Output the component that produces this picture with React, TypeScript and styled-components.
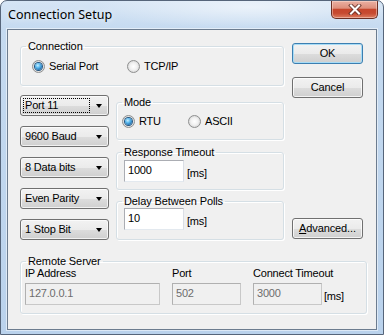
import React from 'react';
import styled, { createGlobalStyle } from 'styled-components';

const GlobalStyle = createGlobalStyle`
  html, body { margin: 0; padding: 0; background: #ffffff; }
  body { font-family: "Liberation Sans", Arial, sans-serif; }
  * { box-sizing: border-box; }
`;

const Window = styled.div`
  width: 384px;
  height: 335px;
  display: flex;
  flex-direction: column;
  background:
    radial-gradient(ellipse 160px 22px at 250px 6px, rgba(255,255,255,0.55), rgba(255,255,255,0) 100%),
    linear-gradient(180deg, #d6e5f5 0px, #c5daf0 28px, #bad2ec 100%);
  border: 1px solid #56657a;
  border-radius: 7px 7px 0 0;
  overflow: hidden;
`;

const TitleBar = styled.div`
  height: 28px;
  flex: none;
  display: flex;
  align-items: flex-start;
  padding-left: 7px;
`;

const Title = styled.div`
  margin-top: 5px;
  font-family: "Noto Sans", "Open Sans", sans-serif;
  font-size: 12.5px;
  line-height: 17px;
  color: #000;
  text-shadow: 0 0 6px rgba(255,255,255,0.9);
`;

const CloseButton = styled.div`
  margin-left: auto;
  margin-right: 5px;
  width: 47px;
  height: 18px;
  display: flex;
  align-items: center;
  justify-content: center;
  border: 1px solid #6b2f24;
  border-top: none;
  border-radius: 0 0 5px 5px;
  background: linear-gradient(180deg, #eab0a2 0%, #de8f7c 42%, #c6462c 50%, #c74a30 72%, #dc7c60 100%);
  box-shadow: inset 0 0 0 1px rgba(255, 230, 220, 0.45);
`;

const Frame = styled.div`
  flex: 1;
  display: flex;
  padding: 0 6px 4px 6px;
`;

const Client = styled.div`
  flex: 1;
  background: #f0f0f0;
  border: 1px solid #6c7c8f;
  box-shadow: 0 0 0 1px rgba(255, 255, 255, 0.5);
  padding: 10px 0 0 12px;
  display: flex;
  flex-direction: column;
  font-size: 11px;
  color: #000;
`;

const Upper = styled.div`
  display: flex;
  align-items: stretch;
`;

const LeftArea = styled.div`
  width: 264px;
  display: flex;
  flex-direction: column;
`;

const Group = styled.fieldset<{ $h: number; $mt?: number; $w?: number }>`
  margin: ${p => p.$mt ?? 0}px 0 0 0;
  padding: 0;
  min-width: 0;
  width: ${p => (p.$w ? `${p.$w}px` : 'auto')};
  height: ${p => p.$h}px;
  border: 1px solid #d5dfe5;
  border-radius: 3px;
  box-shadow: inset 1px 1px 0 #ffffff, 1px 1px 0 #ffffff;
`;

const Legend = styled.legend`
  margin-left: 5px;
  padding: 0 2px;
  font-size: 11px;
  line-height: 13px;
  letter-spacing: -0.1px;
`;

const GroupBody = styled.div<{ $pt: number; $pl: number }>`
  padding: ${p => p.$pt}px 0 0 ${p => p.$pl}px;
  display: flex;
  align-items: center;
`;

const RadioItem = styled.label<{ $w?: number }>`
  display: flex;
  align-items: center;
  width: ${p => (p.$w ? `${p.$w}px` : 'auto')};
  line-height: 13px;
  letter-spacing: -0.2px;
`;

const RadioCircle = styled.span<{ $checked?: boolean }>`
  width: 13px;
  height: 13px;
  flex: none;
  border-radius: 50%;
  border: 1px solid #8e8f8f;
  background: radial-gradient(circle at 50% 50%, #ffffff 0%, #f1f1f1 45%, #d6d6d6 80%, #cbcbcb 100%);
  display: flex;
  align-items: center;
  justify-content: center;
  margin-right: 4px;
  &::after {
    content: '';
    display: ${p => (p.$checked ? 'block' : 'none')};
    width: 7px;
    height: 7px;
    border-radius: 50%;
    background: radial-gradient(circle at 40% 35%, #c9f0ff 0%, #5fbcf0 35%, #1f6fae 75%, #164f80 100%);
    box-shadow: 0 0 0 1px #24557f;
  }
`;

const Lower = styled.div`
  display: flex;
  align-items: flex-start;
  margin-top: 9px;
`;

const ComboCol = styled.div`
  display: flex;
  flex-direction: column;
  gap: 10px;
  width: 89px;
`;

const Combo = styled.div`
  height: 21px;
  display: flex;
  align-items: center;
  padding: 0 6px 0 2px;
  border: 1px solid #707070;
  border-radius: 3px;
  background: linear-gradient(180deg, #f2f2f2 0%, #ebebeb 50%, #dddddd 51%, #cfcfcf 100%);
  box-shadow: inset 0 0 0 1px rgba(255, 255, 255, 0.7);
  &::after {
    content: '';
    margin-left: auto;
    border-left: 3.5px solid transparent;
    border-right: 3.5px solid transparent;
    border-top: 4px solid #000;
  }
`;

const ComboText = styled.span<{ $focused?: boolean }>`
  width: 67px;
  height: 15px;
  padding-left: 1px;
  line-height: 13px;
  border: 1px dotted ${p => (p.$focused ? '#000' : 'transparent')};
  letter-spacing: -0.2px;
  white-space: nowrap;
`;

const GroupCol = styled.div`
  width: 168px;
  margin-left: 7px;
  padding-top: 1px;
  display: flex;
  flex-direction: column;
`;

const FieldRow = styled.div<{ $pl: number; $pt?: number }>`
  display: flex;
  align-items: flex-end;
  padding-left: ${p => p.$pl}px;
  padding-top: ${p => p.$pt ?? 0}px;
`;

const TextBox = styled.div<{ $w: number; $disabled?: boolean }>`
  width: ${p => p.$w}px;
  height: 22px;
  padding: 3px 0 0 3px;
  line-height: 13px;
  background: ${p => (p.$disabled ? '#f0f0f0' : '#ffffff')};
  color: ${p => (p.$disabled ? '#6d6d6d' : '#000')};
  border: 1px solid ${p => (p.$disabled ? '#b0b0b0' : '#abadb3')};
  border-right-color: ${p => (p.$disabled ? '#c8c8c8' : '#dbdfe6')};
  border-bottom-color: ${p => (p.$disabled ? '#c8c8c8' : '#e3e9ef')};
  letter-spacing: -0.2px;
`;

const Unit = styled.span<{ $ml: number }>`
  margin-left: ${p => p.$ml}px;
  margin-bottom: 2px;
  line-height: 13px;
  letter-spacing: -0.2px;
`;

const ButtonCol = styled.div`
  width: 71px;
  margin-left: 8px;
  display: flex;
  flex-direction: column;
  padding-top: 3px;
`;

const Button = styled.div<{ $default?: boolean; $mt?: number; $auto?: boolean }>`
  height: 21px;
  display: flex;
  align-items: center;
  justify-content: center;
  margin-top: ${p => (p.$auto ? 'auto' : `${p.$mt ?? 0}px`)};
  margin-bottom: ${p => (p.$auto ? '1px' : '0')};
  border: 1px solid ${p => (p.$default ? '#3c7fb1' : '#707070')};
  border-radius: 3px;
  background: linear-gradient(180deg, #f2f2f2 0%, #ebebeb 50%, #dddddd 51%, #cfcfcf 100%);
  box-shadow: inset 0 0 0 1px ${p => (p.$default ? '#a8dcf6' : 'rgba(255,255,255,0.75)')};
  line-height: 13px;
  letter-spacing: -0.1px;
  & u { text-decoration: underline; text-underline-offset: 1px; }
`;

const RemoteGrid = styled.div`
  display: grid;
  grid-template-columns: 147px 81px auto;
  padding: 0 0 0 4px;
  margin-top: -1px;
  row-gap: 3px;
`;

const Label = styled.div`
  line-height: 13px;
  letter-spacing: -0.2px;
`;

const Cell = styled.div`
  display: flex;
  align-items: flex-end;
`;

const CloseIcon = () => (
  <svg width="14" height="11" viewBox="0 0 14 11">
    <path d="M3 1.5 L11 9.5 M11 1.5 L3 9.5" stroke="#5a2c25" strokeWidth="4" strokeLinecap="square" opacity="0.75" />
    <path d="M3 1.5 L11 9.5 M11 1.5 L3 9.5" stroke="#ffffff" strokeWidth="2" strokeLinecap="square" />
  </svg>
);

export default function App() {
  return (
    <>
      <GlobalStyle />
      <Window>
        <TitleBar>
          <Title>Connection Setup</Title>
          <CloseButton>
            <CloseIcon />
          </CloseButton>
        </TitleBar>
        <Frame>
          <Client>
            <Upper>
              <LeftArea>
                <Group $h={46}>
                  <Legend>Connection</Legend>
                  <GroupBody $pt={7} $pl={11}>
                    <RadioItem $w={95}>
                      <RadioCircle $checked />
                      Serial Port
                    </RadioItem>
                    <RadioItem>
                      <RadioCircle />
                      TCP/IP
                    </RadioItem>
                  </GroupBody>
                </Group>
                <Lower>
                  <ComboCol>
                    <Combo><ComboText $focused>Port 11</ComboText></Combo>
                    <Combo><ComboText>9600 Baud</ComboText></Combo>
                    <Combo><ComboText>8 Data bits</ComboText></Combo>
                    <Combo><ComboText>Even Parity</ComboText></Combo>
                    <Combo><ComboText>1 Stop Bit</ComboText></Combo>
                  </ComboCol>
                  <GroupCol>
                    <Group $h={44}>
                      <Legend>Mode</Legend>
                      <GroupBody $pt={6} $pl={5}>
                        <RadioItem $w={66}>
                          <RadioCircle $checked />
                          RTU
                        </RadioItem>
                        <RadioItem>
                          <RadioCircle />
                          ASCII
                        </RadioItem>
                      </GroupBody>
                    </Group>
                    <Group $h={44} $mt={6}>
                      <Legend>Response Timeout</Legend>
                      <FieldRow $pl={7} $pt={1}>
                        <TextBox $w={60}>1000</TextBox>
                        <Unit $ml={3}>[ms]</Unit>
                      </FieldRow>
                    </Group>
                    <Group $h={45} $mt={5}>
                      <Legend>Delay Between Polls</Legend>
                      <FieldRow $pl={7}>
                        <TextBox $w={60}>10</TextBox>
                        <Unit $ml={3}>[ms]</Unit>
                      </FieldRow>
                    </Group>
                  </GroupCol>
                </Lower>
              </LeftArea>
              <ButtonCol>
                <Button $default>OK</Button>
                <Button $mt={13}>Cancel</Button>
                <Button $auto>
                  <span><u>A</u>dvanced...</span>
                </Button>
              </ButtonCol>
            </Upper>
            <Group $h={59} $mt={15} $w={347}>
              <Legend>Remote Server</Legend>
              <RemoteGrid>
                <Label>IP Address</Label>
                <Label>Port</Label>
                <Label>Connect Timeout</Label>
                <Cell><TextBox $w={135} $disabled>127.0.0.1</TextBox></Cell>
                <Cell><TextBox $w={69} $disabled>502</TextBox></Cell>
                <Cell>
                  <TextBox $w={69} $disabled>3000</TextBox>
                  <Unit $ml={2}>[ms]</Unit>
                </Cell>
              </RemoteGrid>
            </Group>
          </Client>
        </Frame>
      </Window>
    </>
  );
}
